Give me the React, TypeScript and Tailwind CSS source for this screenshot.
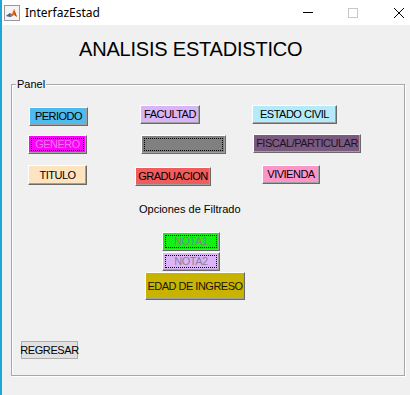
import React from "react";

type Btn = {
  label: string;
  cls: string;
  text?: string;
  focus?: boolean;
};

const font = { fontFamily: '"Liberation Sans", Arial, sans-serif' };

const Button3D = ({ label, cls, text = "text-black", focus }: Btn) => (
  <div
    className={`flex items-center justify-center border border-t-white border-l-white border-r-[#696969] border-b-[#696969] shadow-[inset_-1px_-1px_0_#a0a0a0] text-[11px] tracking-[-0.5px] leading-none shrink-0 ${cls} ${text}`}
    style={font}
  >
    {focus ? (
      <span className="flex items-center justify-center w-[calc(100%-4px)] h-[calc(100%-4px)] border border-dotted border-black">
        {label}
      </span>
    ) : (
      label
    )}
  </div>
);

const MatlabIcon = () => (
  <svg width="16" height="16" viewBox="0 0 16 16">
    <rect x="0.5" y="0.5" width="15" height="15" fill="#f4f4f4" stroke="#9a9a9a" />
    <path d="M2 11 L6 8 L8 9 L10 4 L13 12 L10 10 L7 12 Z" fill="#e06a1a" />
    <path d="M2 11 L6 8 L7 12 Z" fill="#2a6fd0" />
    <path d="M10 4 L13 12 L11 10 Z" fill="#b83a10" />
  </svg>
);

const App = () => {
  return (
    <div className="w-[410px] h-[395px] bg-[#f0f0f0] border-l-2 border-[#1aa7d8] overflow-hidden flex flex-col" style={font}>
      {/* title bar */}
      <div className="h-[25px] bg-white flex items-center shrink-0 -ml-[2px]">
        <div className="ml-[4px]">
          <MatlabIcon />
        </div>
        <span className="ml-[5px] text-[12px] text-black" style={{ fontFamily: '"Noto Sans", sans-serif' }}>
          InterfazEstad
        </span>
        <div className="ml-auto flex items-center">
          <div className="w-[10px] h-px bg-black mr-[35px]" />
          <div className="w-[10px] h-[10px] border border-[#c8c8c8] mr-[36px]" />
          <svg width="10" height="10" viewBox="0 0 10 10" className="mr-[6px]">
            <path d="M0 0 L10 10 M10 0 L0 10" stroke="#000" strokeWidth="1" />
          </svg>
        </div>
      </div>

      {/* heading */}
      <div className="ml-[77px] mt-[12px] text-[20px] leading-[24px] text-black tracking-[-0.2px]">
        ANALISIS ESTADISTICO
      </div>

      {/* panel */}
      <div className="relative ml-[9px] mt-[23px] w-[394px] h-[292px] border border-[#a8a8a8] shadow-[inset_1px_1px_0_#ffffff,1px_1px_0_#ffffff]">
        <span className="absolute -top-[8px] left-[4px] bg-[#f0f0f0] px-[1px] text-[11px] leading-[14px] text-black">
          Panel
        </span>

        <div className="flex flex-col">
          <div className="flex items-start mt-[20px] h-[22px]">
            <div className="ml-[17px] mt-[2px]">
              <Button3D label="PERIODO" cls="w-[59px] h-[19px] bg-[#4dbbee]" />
            </div>
            <div className="ml-[52px]">
              <Button3D label="FACULTAD" cls="w-[60px] h-[19px] bg-[#dab4f8]" />
            </div>
            <div className="ml-[52px]">
              <Button3D label="ESTADO CIVIL" cls="w-[85px] h-[19px] bg-[#b4ebfa]" />
            </div>
          </div>

          <div className="flex items-start mt-[7px] h-[22px]">
            <div className="ml-[16px] mt-[1px]">
              <Button3D label="GENERO" cls="w-[59px] h-[19px] bg-[#ff00ff]" text="text-[#e77ae7]" focus />
            </div>
            <div className="ml-[54px] mt-[1px]">
              <Button3D label="" cls="w-[85px] h-[19px] bg-[#808080]" focus />
            </div>
            <div className="ml-[27px]">
              <Button3D label="FISCAL/PARTICULAR" cls="w-[108px] h-[19px] bg-[#7c5a80]" text="text-[#1e1226]" />
            </div>
          </div>

          <div className="flex items-start mt-[9px] h-[22px]">
            <div className="ml-[16px]">
              <Button3D label="TITULO" cls="w-[59px] h-[20px] bg-[#fde3c0]" />
            </div>
            <div className="ml-[48px] mt-[2px]">
              <Button3D label="GRADUACION" cls="w-[76px] h-[19px] bg-[#f25c5c]" />
            </div>
            <div className="ml-[51px]">
              <Button3D label="VIVIENDA" cls="w-[58px] h-[19px] bg-[#ff94c8]" />
            </div>
          </div>

          <div className="ml-[127px] mt-[15px] text-[11px] leading-[14px] text-black">
            Opciones de Filtrado
          </div>

          <div className="ml-[150px] mt-[16px]">
            <Button3D label="NOTA1" cls="w-[58px] h-[19px] bg-[#14f014]" text="text-[#7d8a7d]" focus />
          </div>
          <div className="ml-[150px] mt-px">
            <Button3D label="NOTA2" cls="w-[58px] h-[19px] bg-[#dcb4f8]" text="text-[#8a8296]" focus />
          </div>
          <div className="ml-[133px] mt-px">
            <Button3D label="EDAD DE INGRESO" cls="w-[100px] h-[28px] bg-[#c8b400]" text="text-[#1a1400]" />
          </div>

          <div className="ml-[9px] mt-[41px]">
            <div className="w-[57px] h-[18px] flex items-center justify-center bg-[#e1e1e1] border border-[#adadad] text-[11px] tracking-[-0.4px] text-black leading-none">
              REGRESAR
            </div>
          </div>
        </div>
      </div>
    </div>
  );
};

export default App;
